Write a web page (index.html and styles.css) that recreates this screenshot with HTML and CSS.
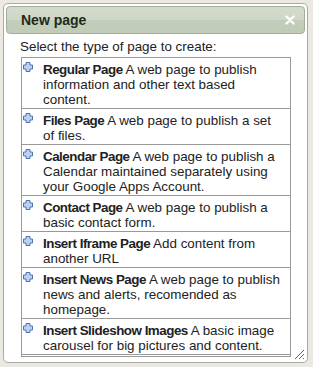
FILE: index.html
```html
<!DOCTYPE html>
<html lang="en">
<head>
    <meta charset="UTF-8">
    <title>New page</title>
    <link rel="stylesheet" href="styles.css">
</head>
<body>
    <div class="dialog">
        <div class="titlebar">
            <span class="title">New page</span>
            <svg class="close" width="10" height="10" viewBox="0 0 10 10">
                <path d="M1.5 1.5 L8.5 8.5 M8.5 1.5 L1.5 8.5" stroke="#fff" stroke-width="2.4" stroke-linecap="round"/>
            </svg>
        </div>
        <div class="content">
            <p class="intro">Select the type of page to create:</p>
            <ul class="page-types">
                <li class="page-type">
                    <svg class="plus" width="10" height="10" viewBox="0 0 10 10"><path d="M3 0.5h4v2.5h2.5v4h-2.5v2.5h-4v-2.5h-2.5v-4h2.5z" fill="#bcd0ef" stroke="#4d74b2"/></svg>
                    <span><b>Regular Page</b> A web page to publish information and other text based content.</span>
                </li>
                <li class="page-type">
                    <svg class="plus" width="10" height="10" viewBox="0 0 10 10"><path d="M3 0.5h4v2.5h2.5v4h-2.5v2.5h-4v-2.5h-2.5v-4h2.5z" fill="#bcd0ef" stroke="#4d74b2"/></svg>
                    <span><b>Files Page</b> A web page to publish a set of files.</span>
                </li>
                <li class="page-type">
                    <svg class="plus" width="10" height="10" viewBox="0 0 10 10"><path d="M3 0.5h4v2.5h2.5v4h-2.5v2.5h-4v-2.5h-2.5v-4h2.5z" fill="#bcd0ef" stroke="#4d74b2"/></svg>
                    <span><b>Calendar Page</b> A web page to publish a Calendar maintained separately using your Google Apps Account.</span>
                </li>
                <li class="page-type">
                    <svg class="plus" width="10" height="10" viewBox="0 0 10 10"><path d="M3 0.5h4v2.5h2.5v4h-2.5v2.5h-4v-2.5h-2.5v-4h2.5z" fill="#bcd0ef" stroke="#4d74b2"/></svg>
                    <span><b>Contact Page</b> A web page to publish a basic contact form.</span>
                </li>
                <li class="page-type">
                    <svg class="plus" width="10" height="10" viewBox="0 0 10 10"><path d="M3 0.5h4v2.5h2.5v4h-2.5v2.5h-4v-2.5h-2.5v-4h2.5z" fill="#bcd0ef" stroke="#4d74b2"/></svg>
                    <span><b>Insert Iframe Page</b> Add content from another URL</span>
                </li>
                <li class="page-type">
                    <svg class="plus" width="10" height="10" viewBox="0 0 10 10"><path d="M3 0.5h4v2.5h2.5v4h-2.5v2.5h-4v-2.5h-2.5v-4h2.5z" fill="#bcd0ef" stroke="#4d74b2"/></svg>
                    <span><b>Insert News Page</b> A web page to publish news and alerts, recomended as homepage.</span>
                </li>
                <li class="page-type">
                    <svg class="plus" width="10" height="10" viewBox="0 0 10 10"><path d="M3 0.5h4v2.5h2.5v4h-2.5v2.5h-4v-2.5h-2.5v-4h2.5z" fill="#bcd0ef" stroke="#4d74b2"/></svg>
                    <span><b>Insert Slideshow Images</b> A basic image carousel for big pictures and content.</span>
                </li>
            </ul>
        </div>
        <svg class="grip" width="12" height="12" viewBox="0 0 12 12">
            <path d="M11 2 L2 11 M11 6 L6 11 M11 10 L10 11" stroke="#666" stroke-width="1"/>
        </svg>
    </div>
</body>
</html>
```

FILE: styles.css
```css
body {
    margin: 0;
    background-color: #ebe9e1;
    font-family: "Liberation Sans", Arial, sans-serif;
    font-size: 13.4px;
    color: #222;
}
.dialog {
    position: relative;
    margin: 3px;
    width: 299px;
    height: 354px;
    padding: 2px;
    background-color: #fff;
    border: 1px solid #a9a9a9;
    border-radius: 5px;
}
.titlebar {
    display: flex;
    align-items: center;
    justify-content: space-between;
    height: 26px;
    padding: 0 9px 0 14px;
    border: 1px solid #a3ad9b;
    border-radius: 4px;
    background: linear-gradient(#d3dbcd 0%, #ced7c7 50%, #c3ceba 51%, #c1ccb8 100%);
}
.title {
    font-size: 14px;
    font-weight: bold;
    color: #1f2a1a;
}
.content {
    padding: 5px 14px 0 14px;
}
.intro {
    margin: 0 0 3px 0;
    line-height: 15px;
}
.page-types {
    list-style: none;
    margin: 0;
    padding: 0 0 1px 0;
    width: 268px;
    margin-left: 1px;
    border: 1px solid #999;
}
.page-type {
    display: flex;
    align-items: flex-start;
    padding: 4px 5px 1px 0;
    line-height: 15px;
    border-bottom: 1px solid #999;
}
.page-type b {
    letter-spacing: -0.5px;
}
.plus {
    flex: none;
    margin: 0 10px 0 1px;
}
.grip {
    position: absolute;
    right: 2px;
    bottom: 2px;
}
```
